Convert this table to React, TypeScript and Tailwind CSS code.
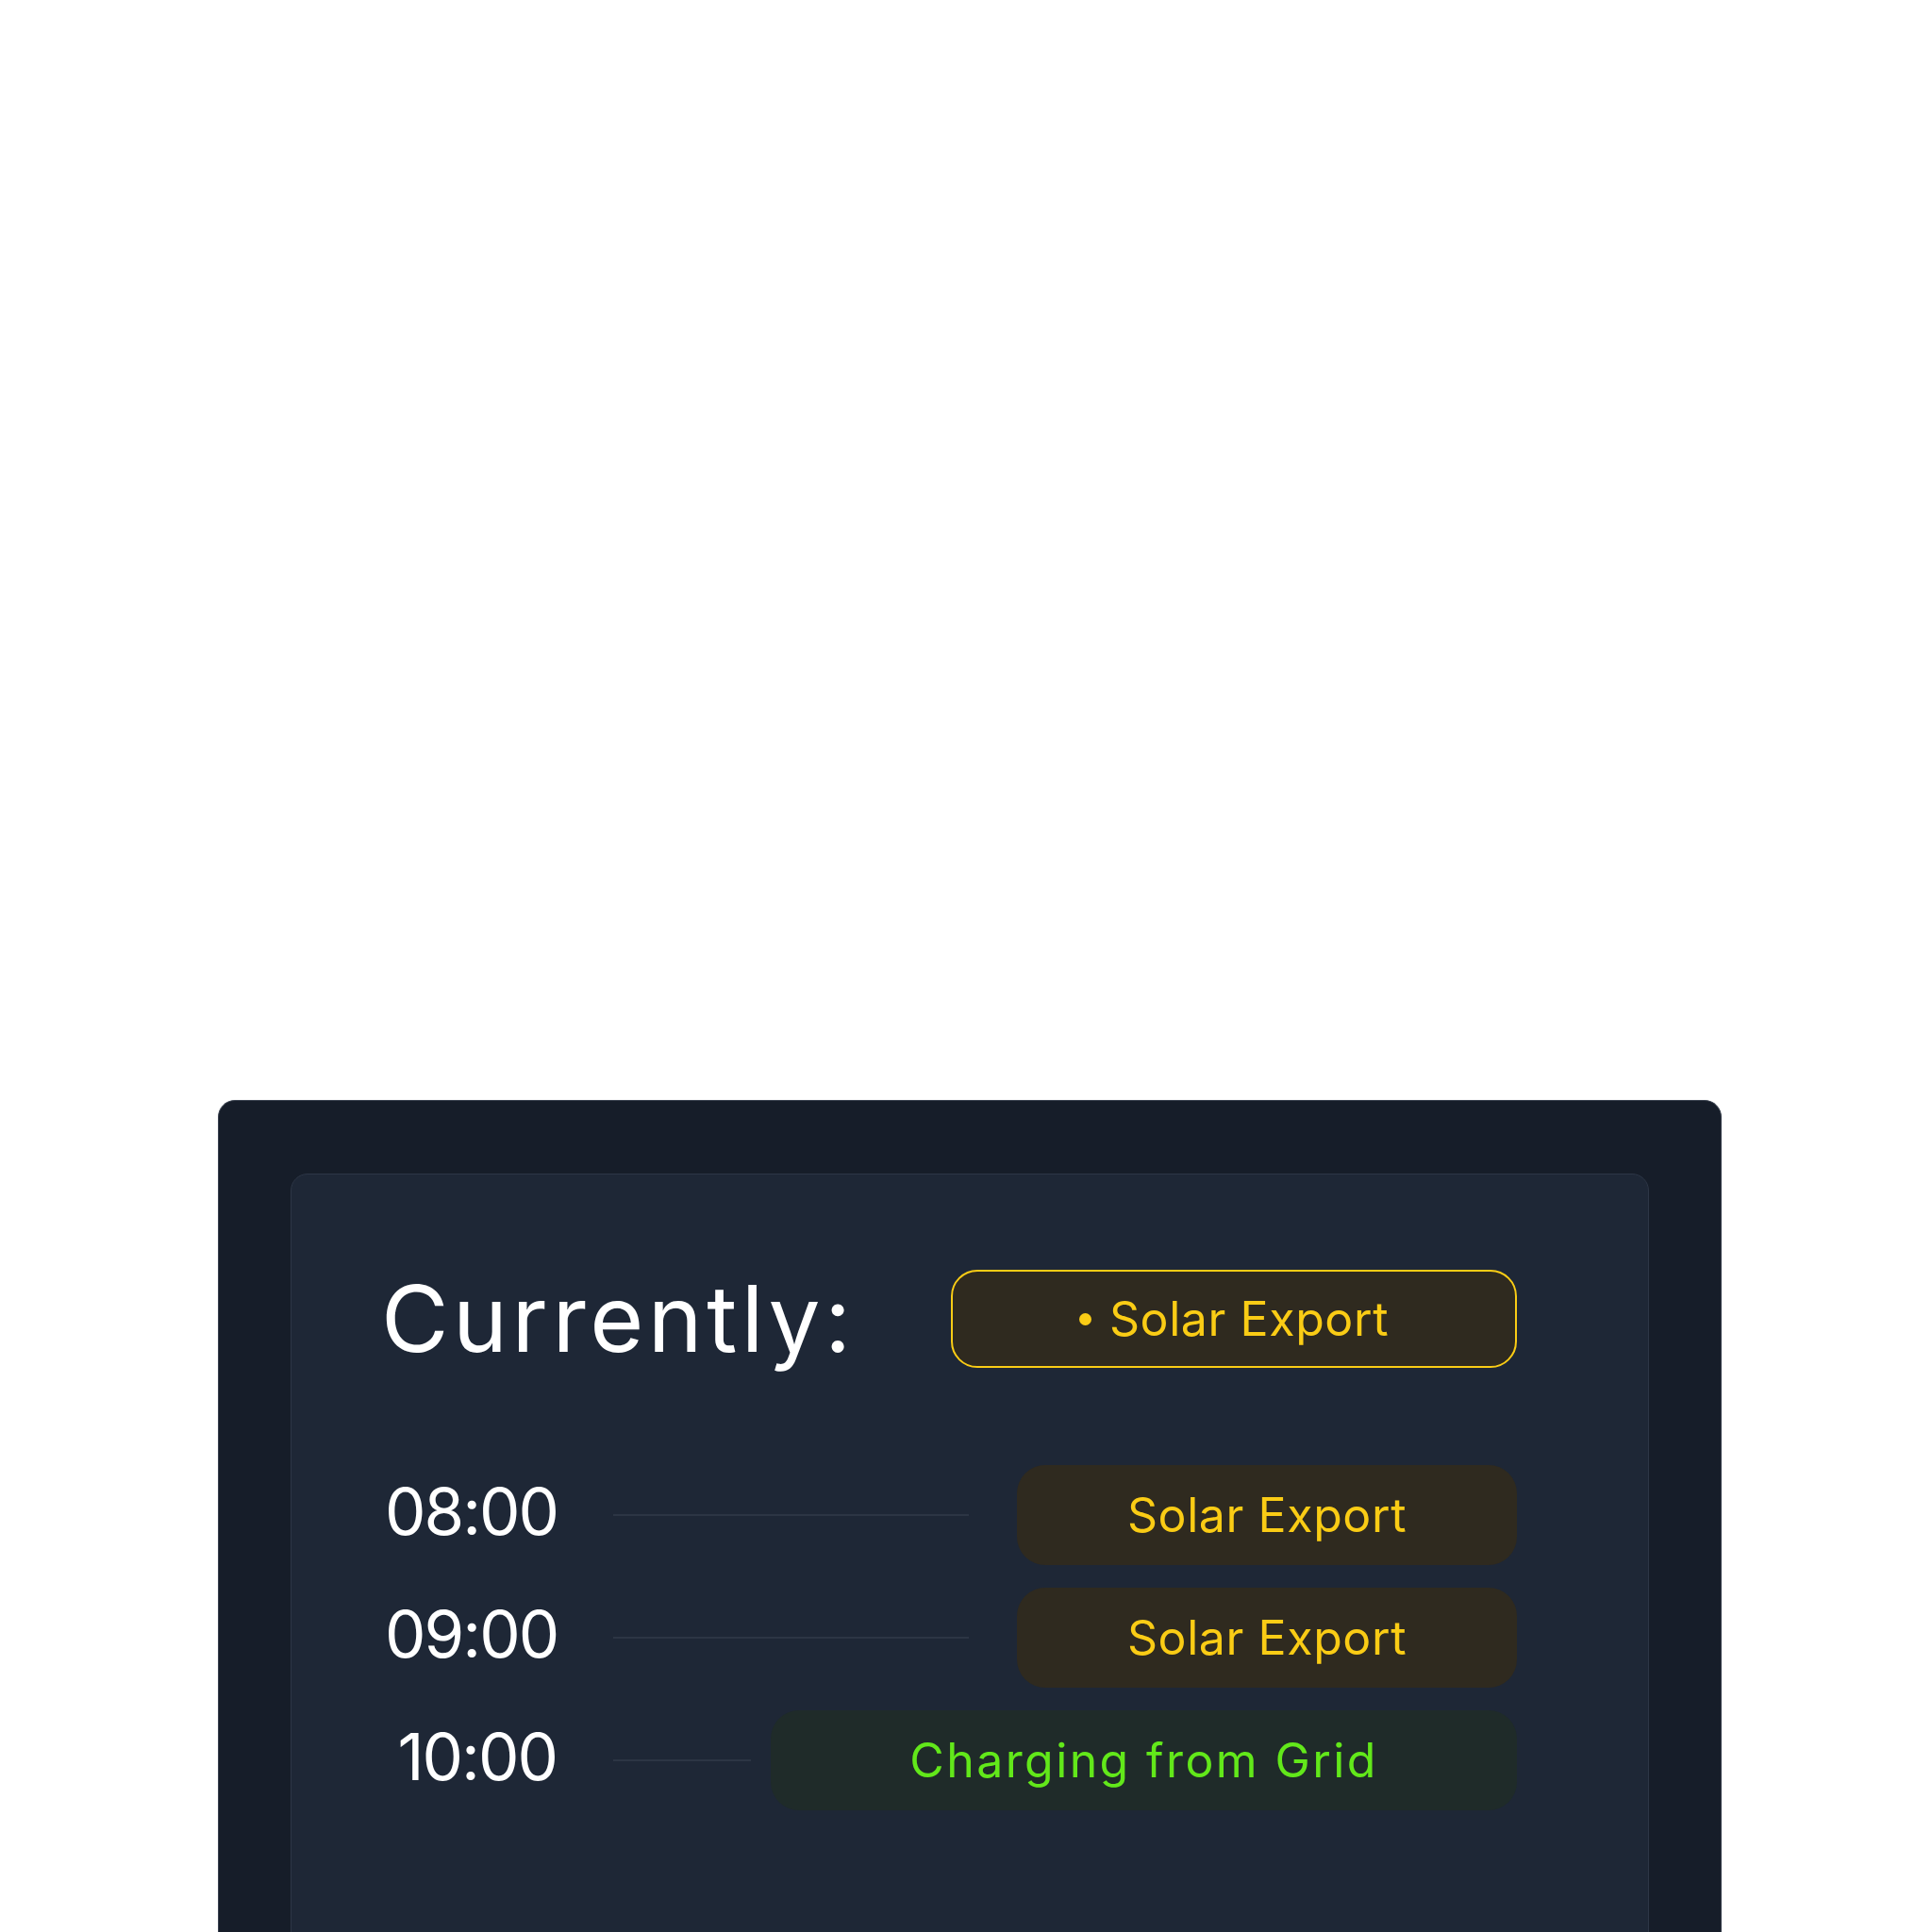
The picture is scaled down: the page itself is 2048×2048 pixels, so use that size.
import React from "react";

type Row = {
  time: string;
  label: string;
  lineW: number;
  pillW: number;
  kind: "solar" | "grid";
};

const rows: Row[] = [
  { time: "08:00", label: "Solar Export", lineW: 377, pillW: 530, kind: "solar" },
  { time: "09:00", label: "Solar Export", lineW: 377, pillW: 530, kind: "solar" },
  { time: "10:00", label: "Charging from Grid", lineW: 146, pillW: 791, kind: "grid" },
];

export default function App() {
  return (
    <div
      className="min-h-screen bg-white pt-[1166px]"
      style={{ fontFamily: 'Inter, "Noto Sans", sans-serif' }}
    >
      <div className="ml-[231px] w-[1594px] rounded-[18px] border border-[#3b4350] bg-[#161d29] px-[76px] pt-[77px]">
        <div className="w-[1440px] rounded-[18px] border border-[#2d3646] bg-[#1e2736] pl-[99px] pt-[101px] pb-[200px]">
          <div className="flex w-[1200px] items-center justify-between">
            <h1 className="-ml-[4px] text-[98px] font-normal leading-none tracking-[4.5px] text-white">
              Currently:
            </h1>
            <div className="flex h-[104px] w-[600px] items-center justify-center gap-[19px] rounded-[28px] border-2 border-[#facc15] bg-[#2f2a1f] text-[50px] leading-none tracking-[0.6px] text-[#facc15]">
              <span className="h-[13px] w-[13px] rounded-full bg-[#facc15]" />
              <span>Solar Export</span>
            </div>
          </div>

          <div className="mt-[103px] flex w-[1200px] flex-col gap-[24px]">
            {rows.map((r) => (
              <div key={r.time} className="flex h-[106px] items-center">
                <div className="w-[182px] pb-[8px] text-right text-[69px] leading-none tracking-[-2px] text-white">
                  {r.time}
                </div>
                <div
                  className="ml-[60px] h-[2px] bg-[#2c3544]"
                  style={{ width: r.lineW }}
                />
                <div
                  className={
                    r.kind === "solar"
                      ? "ml-auto flex h-full items-center justify-center rounded-[30px] bg-[#2f2a1f] text-[50px] leading-none tracking-[0.6px] text-[#facc15]"
                      : "ml-auto flex h-full items-center justify-center rounded-[30px] bg-[#1f2b29] text-[50px] leading-none tracking-[2.4px] text-[#62e81a]"
                  }
                  style={{ width: r.pillW }}
                >
                  {r.label}
                </div>
              </div>
            ))}
          </div>
        </div>
      </div>
    </div>
  );
}
